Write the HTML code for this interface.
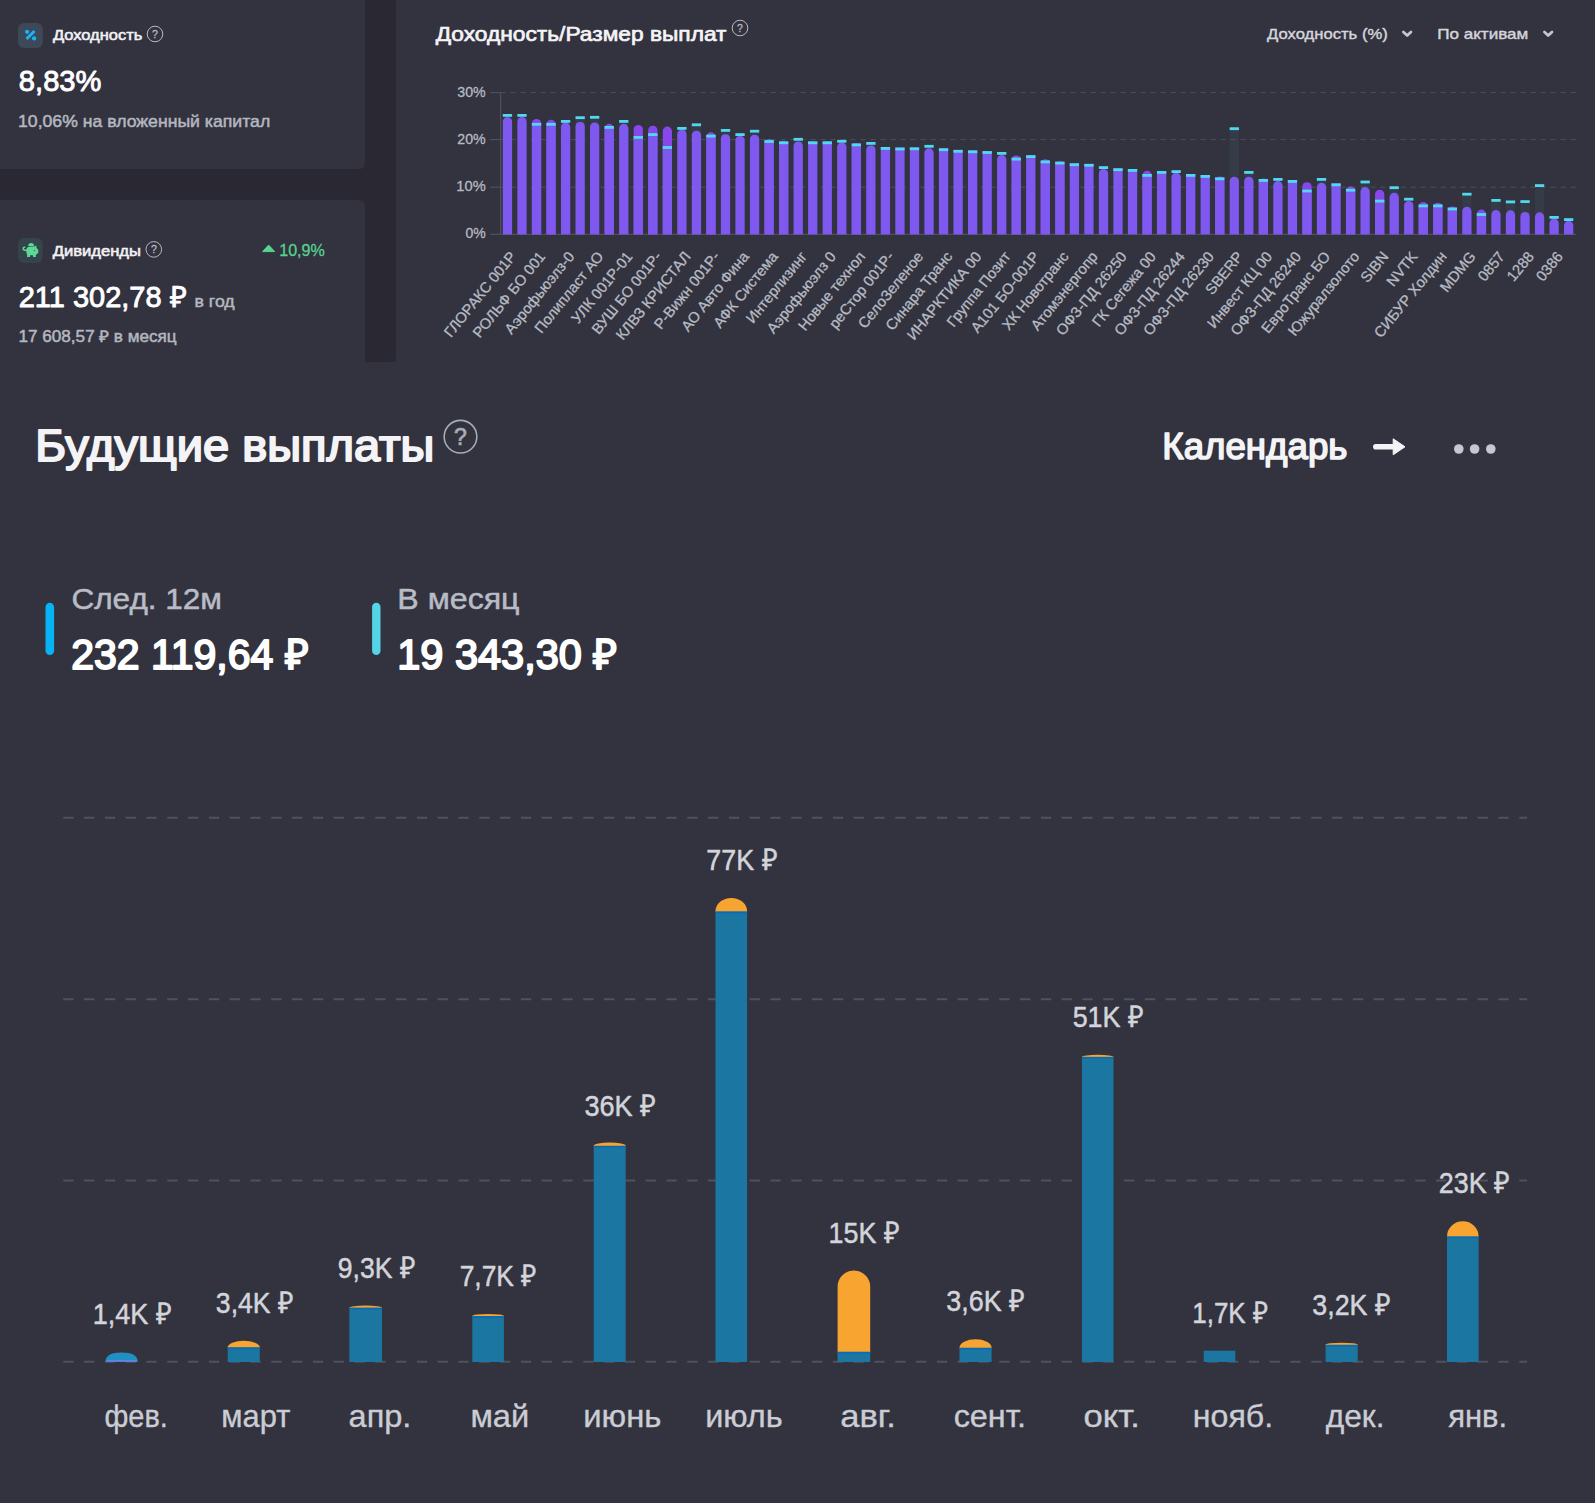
<!DOCTYPE html>
<html><head><meta charset="utf-8"><title>Доходность</title>
<style>
html,body{margin:0;padding:0;background:#33323f;width:1595px;height:1503px;overflow:hidden}
svg{display:block}
text{font-family:"Liberation Sans",sans-serif}
</style></head><body>
<svg width="1595" height="1503" viewBox="0 0 1595 1503">

<rect x="0" y="0" width="1595" height="1503" fill="#33323f"/>
<rect x="0" y="0" width="396" height="362" fill="#292833"/>
<path d="M0 0 H365 V163 Q365 169 359 169 H0 Z" fill="#33323f"/>
<path d="M0 200 H359 Q365 200 365 206 V362 H0 Z" fill="#33323f"/>
<rect x="396" y="0" width="1199" height="362" fill="#33323f"/>
<rect x="18" y="23" width="24.8" height="24.9" rx="6" fill="#3d4959"/>
<g fill="#14b6f6"><circle cx="27.1" cy="31.8" r="2.1"/><circle cx="34.1" cy="38.4" r="2.1"/></g>
<line x1="26.6" y1="38.9" x2="34.5" y2="31" stroke="#14b6f6" stroke-width="2.9"/>
<text x="52.98" y="39.6" font-size="14.5" font-weight="400" fill="#f2f2f4" textLength="89.38" lengthAdjust="spacingAndGlyphs" stroke="#f2f2f4" stroke-width="0.55" stroke-linejoin="round" >Доходность</text>
<circle cx="155" cy="34" r="7.8" fill="none" stroke="#b5b9c1" stroke-width="1"/>
<text x="155" y="37.7908" font-size="10.5" font-weight="400" fill="#b5b9c1" text-anchor="middle" stroke="#b5b9c1" stroke-width="0.3">?</text>
<text x="18.85" y="91.2" font-size="29" font-weight="400" fill="#ffffff" textLength="82.59" lengthAdjust="spacingAndGlyphs" stroke="#ffffff" stroke-width="0.9" stroke-linejoin="round" >8,83%</text>
<text x="18.01" y="126.5" font-size="17" font-weight="400" fill="#b3b7bf" textLength="252.19" lengthAdjust="spacingAndGlyphs" stroke="#b3b7bf" stroke-width="0.5" stroke-linejoin="round" >10,06% на вложенный капитал</text>
<rect x="18.1" y="238.1" width="24.6" height="24.9" rx="6" fill="#35444a"/>
<g fill="#5ed898"><path d="M26.2 250.5 Q26.2 246.6 31 246.6 L34 246.6 L36.3 245.6 L36.5 248.2 Q38.3 248.6 38.3 250.2 L38.3 252.6 Q37.2 254.6 35.8 254.8 L35.8 256.9 L33 256.9 L33 255.2 L30 255.2 L30 256.9 L27.1 256.9 L27.1 254.2 Q26.2 253 26.2 250.5 Z"/><path d="M28.2 246.1 A2.9 3.1 0 0 1 34 246.1 Z"/></g>
<path d="M26.4 250.3 Q23.4 250.6 23.2 248.6 Q23.2 247 24.7 247.2" fill="none" stroke="#5ed898" stroke-width="1.4" stroke-linecap="round"/>
<circle cx="34.5" cy="250.5" r="0.6" fill="#35444a"/>
<text x="52.67" y="256" font-size="14.5" font-weight="400" fill="#f2f2f4" textLength="88.33" lengthAdjust="spacingAndGlyphs" stroke="#f2f2f4" stroke-width="0.55" stroke-linejoin="round" >Дивиденды</text>
<circle cx="153.8" cy="249.4" r="7.8" fill="none" stroke="#b5b9c1" stroke-width="1"/>
<text x="153.8" y="253.1908" font-size="10.5" font-weight="400" fill="#b5b9c1" text-anchor="middle" stroke="#b5b9c1" stroke-width="0.3">?</text>
<path d="M262.6 251.6 L268.6 245 L274.7 251.6 Z" fill="#55d48f" stroke="#55d48f" stroke-width="1" stroke-linejoin="round"/>
<text x="279.20" y="256" font-size="17" font-weight="400" fill="#55d48f" textLength="45.66" lengthAdjust="spacingAndGlyphs" stroke="#55d48f" stroke-width="0.3" stroke-linejoin="round" >10,9%</text>
<text x="18.75" y="306.9" font-size="29" font-weight="400" fill="#ffffff" textLength="167.80" lengthAdjust="spacingAndGlyphs" stroke="#ffffff" stroke-width="0.9" stroke-linejoin="round" >211 302,78 ₽</text>
<text x="194.54" y="306.9" font-size="16" font-weight="400" fill="#b3b7bf" textLength="40.17" lengthAdjust="spacingAndGlyphs" stroke="#b3b7bf" stroke-width="0.5" stroke-linejoin="round" >в год</text>
<text x="18.48" y="341.5" font-size="16" font-weight="400" fill="#b3b7bf" textLength="158.15" lengthAdjust="spacingAndGlyphs" stroke="#b3b7bf" stroke-width="0.5" stroke-linejoin="round" >17 608,57 ₽ в месяц</text>
<text x="435.65" y="40.9" font-size="21" font-weight="400" fill="#f4f4f6" textLength="290.89" lengthAdjust="spacingAndGlyphs" stroke="#f4f4f6" stroke-width="0.7" stroke-linejoin="round" >Доходность/Размер выплат</text>
<circle cx="740" cy="28" r="7.8" fill="none" stroke="#b5b9c1" stroke-width="1"/>
<text x="740" y="31.7908" font-size="10.5" font-weight="400" fill="#b5b9c1" text-anchor="middle" stroke="#b5b9c1" stroke-width="0.3">?</text>
<text x="1267.10" y="38.6" font-size="14.5" font-weight="400" fill="#d4d6db" textLength="120.65" lengthAdjust="spacingAndGlyphs" stroke="#d4d6db" stroke-width="0.4" stroke-linejoin="round" >Доходность (%)</text>
<path d="M1403.4 32 L1407.2 35.6 L1411 32" fill="none" stroke="#c3c6cc" stroke-width="2.7" stroke-linecap="round" stroke-linejoin="round"/>
<text x="1437.22" y="38.6" font-size="14.5" font-weight="400" fill="#d4d6db" textLength="91.12" lengthAdjust="spacingAndGlyphs" stroke="#d4d6db" stroke-width="0.4" stroke-linejoin="round" >По активам</text>
<path d="M1544.4 32 L1548.2 35.6 L1552 32" fill="none" stroke="#c3c6cc" stroke-width="2.7" stroke-linecap="round" stroke-linejoin="round"/>
<rect x="575.49" y="116.30" width="9.3" height="10.60" fill="#353c48"/>
<rect x="590.02" y="115.90" width="9.3" height="11.60" fill="#353c48"/>
<rect x="619.10" y="120.00" width="9.3" height="8.80" fill="#353c48"/>
<rect x="691.78" y="123.40" width="9.3" height="12.30" fill="#353c48"/>
<rect x="720.86" y="129.00" width="9.3" height="10.10" fill="#353c48"/>
<rect x="749.93" y="129.80" width="9.3" height="9.90" fill="#353c48"/>
<rect x="793.54" y="137.90" width="9.3" height="8.50" fill="#353c48"/>
<rect x="866.23" y="142.00" width="9.3" height="8.40" fill="#353c48"/>
<rect x="924.37" y="144.90" width="9.3" height="8.40" fill="#353c48"/>
<rect x="1229.65" y="127.30" width="9.3" height="54.40" fill="#353c48"/>
<rect x="1244.19" y="171.00" width="9.3" height="10.70" fill="#353c48"/>
<rect x="1316.87" y="178.00" width="9.3" height="9.70" fill="#353c48"/>
<rect x="1360.48" y="180.60" width="9.3" height="11.50" fill="#353c48"/>
<rect x="1389.56" y="186.30" width="9.3" height="11.50" fill="#353c48"/>
<rect x="1462.24" y="192.80" width="9.3" height="19.00" fill="#353c48"/>
<rect x="1491.32" y="199.00" width="9.3" height="16.10" fill="#353c48"/>
<rect x="1505.85" y="200.50" width="9.3" height="14.80" fill="#353c48"/>
<rect x="1520.39" y="200.20" width="9.3" height="16.80" fill="#353c48"/>
<rect x="1534.93" y="184.20" width="9.3" height="33.10" fill="#353c48"/>
<line x1="500.6" y1="92.6" x2="1576" y2="92.6" stroke="#4b5159" stroke-width="1" stroke-dasharray="5 5"/>
<line x1="490" y1="92.6" x2="501" y2="92.6" stroke="#4b5159" stroke-width="1.2"/>
<text x="457.35" y="96.5" font-size="14.7" font-weight="400" fill="#b6bac2" textLength="28.36" lengthAdjust="spacingAndGlyphs" stroke="#b6bac2" stroke-width="0.3" stroke-linejoin="round" >30%</text>
<line x1="500.6" y1="139.6" x2="1576" y2="139.6" stroke="#4b5159" stroke-width="1" stroke-dasharray="5 5"/>
<line x1="490" y1="139.6" x2="501" y2="139.6" stroke="#4b5159" stroke-width="1.2"/>
<text x="457.35" y="143.5" font-size="14.7" font-weight="400" fill="#b6bac2" textLength="28.36" lengthAdjust="spacingAndGlyphs" stroke="#b6bac2" stroke-width="0.3" stroke-linejoin="round" >20%</text>
<line x1="500.6" y1="187.2" x2="1576" y2="187.2" stroke="#4b5159" stroke-width="1" stroke-dasharray="5 5"/>
<line x1="490" y1="187.2" x2="501" y2="187.2" stroke="#4b5159" stroke-width="1.2"/>
<text x="456.35" y="191.1" font-size="14.7" font-weight="400" fill="#b6bac2" textLength="29.36" lengthAdjust="spacingAndGlyphs" stroke="#b6bac2" stroke-width="0.3" stroke-linejoin="round" >10%</text>
<text x="465.45" y="238.3" font-size="14.7" font-weight="400" fill="#b6bac2" textLength="20.26" lengthAdjust="spacingAndGlyphs" stroke="#b6bac2" stroke-width="0.3" stroke-linejoin="round" >0%</text>
<line x1="490" y1="234.4" x2="1576" y2="234.4" stroke="#4b5159" stroke-width="1.3"/>
<line x1="500.6" y1="92.6" x2="500.6" y2="234.4" stroke="#4b5159" stroke-width="1.3"/>
<path d="M502.80 234.4 V121.55 A4.65 4.65 0 0 1 512.10 121.55 V234.4 Z" fill="#7f58ef"/>
<rect x="502.80" y="114.00" width="9.3" height="2.8" fill="#4fd9ef"/>
<path d="M517.34 234.4 V121.55 A4.65 4.65 0 0 1 526.64 121.55 V234.4 Z" fill="#7f58ef"/>
<rect x="517.34" y="114.00" width="9.3" height="2.8" fill="#4fd9ef"/>
<path d="M531.87 234.4 V123.65 A4.65 4.65 0 0 1 541.17 123.65 V234.4 Z" fill="#8747ea"/>
<rect x="531.87" y="122.90" width="9.3" height="111.50" fill="#7f58ef"/>
<rect x="531.87" y="122.90" width="9.3" height="2.8" fill="#4fd9ef"/>
<path d="M546.41 234.4 V124.45 A4.65 4.65 0 0 1 555.71 124.45 V234.4 Z" fill="#8747ea"/>
<rect x="546.41" y="122.90" width="9.3" height="111.50" fill="#7f58ef"/>
<rect x="546.41" y="122.90" width="9.3" height="2.8" fill="#4fd9ef"/>
<path d="M560.95 234.4 V127.15 A4.65 4.65 0 0 1 570.25 127.15 V234.4 Z" fill="#7f58ef"/>
<rect x="560.95" y="120.00" width="9.3" height="2.8" fill="#4fd9ef"/>
<path d="M575.49 234.4 V126.55 A4.65 4.65 0 0 1 584.78 126.55 V234.4 Z" fill="#7f58ef"/>
<rect x="575.49" y="116.30" width="9.3" height="2.8" fill="#4fd9ef"/>
<path d="M590.02 234.4 V127.15 A4.65 4.65 0 0 1 599.32 127.15 V234.4 Z" fill="#7f58ef"/>
<rect x="590.02" y="115.90" width="9.3" height="2.8" fill="#4fd9ef"/>
<path d="M604.56 234.4 V128.45 A4.65 4.65 0 0 1 613.86 128.45 V234.4 Z" fill="#8747ea"/>
<rect x="604.56" y="126.00" width="9.3" height="108.40" fill="#7f58ef"/>
<rect x="604.56" y="126.00" width="9.3" height="2.8" fill="#4fd9ef"/>
<path d="M619.10 234.4 V128.45 A4.65 4.65 0 0 1 628.40 128.45 V234.4 Z" fill="#7f58ef"/>
<rect x="619.10" y="120.00" width="9.3" height="2.8" fill="#4fd9ef"/>
<path d="M633.63 234.4 V129.65 A4.65 4.65 0 0 1 642.93 129.65 V234.4 Z" fill="#8747ea"/>
<rect x="633.63" y="136.00" width="9.3" height="98.40" fill="#7f58ef"/>
<rect x="633.63" y="136.00" width="9.3" height="2.8" fill="#4fd9ef"/>
<path d="M648.17 234.4 V130.35 A4.65 4.65 0 0 1 657.47 130.35 V234.4 Z" fill="#8747ea"/>
<rect x="648.17" y="133.20" width="9.3" height="101.20" fill="#7f58ef"/>
<rect x="648.17" y="133.20" width="9.3" height="2.8" fill="#4fd9ef"/>
<path d="M662.71 234.4 V131.25 A4.65 4.65 0 0 1 672.01 131.25 V234.4 Z" fill="#8747ea"/>
<rect x="662.71" y="146.10" width="9.3" height="88.30" fill="#7f58ef"/>
<rect x="662.71" y="146.10" width="9.3" height="2.8" fill="#4fd9ef"/>
<path d="M677.24 234.4 V134.15 A4.65 4.65 0 0 1 686.54 134.15 V234.4 Z" fill="#7f58ef"/>
<rect x="677.24" y="127.00" width="9.3" height="2.8" fill="#4fd9ef"/>
<path d="M691.78 234.4 V135.35 A4.65 4.65 0 0 1 701.08 135.35 V234.4 Z" fill="#7f58ef"/>
<rect x="691.78" y="123.40" width="9.3" height="2.8" fill="#4fd9ef"/>
<path d="M706.32 234.4 V136.95 A4.65 4.65 0 0 1 715.62 136.95 V234.4 Z" fill="#8747ea"/>
<rect x="706.32" y="134.70" width="9.3" height="99.70" fill="#7f58ef"/>
<rect x="706.32" y="134.70" width="9.3" height="2.8" fill="#4fd9ef"/>
<path d="M720.86 234.4 V138.75 A4.65 4.65 0 0 1 730.15 138.75 V234.4 Z" fill="#7f58ef"/>
<rect x="720.86" y="129.00" width="9.3" height="2.8" fill="#4fd9ef"/>
<path d="M735.39 234.4 V140.35 A4.65 4.65 0 0 1 744.69 140.35 V234.4 Z" fill="#7f58ef"/>
<rect x="735.39" y="133.20" width="9.3" height="2.8" fill="#4fd9ef"/>
<path d="M749.93 234.4 V139.35 A4.65 4.65 0 0 1 759.23 139.35 V234.4 Z" fill="#7f58ef"/>
<rect x="749.93" y="129.80" width="9.3" height="2.8" fill="#4fd9ef"/>
<path d="M764.47 234.4 V143.75 A4.65 4.65 0 0 1 773.77 143.75 V234.4 Z" fill="#8747ea"/>
<rect x="764.47" y="140.10" width="9.3" height="94.30" fill="#7f58ef"/>
<rect x="764.47" y="140.10" width="9.3" height="2.8" fill="#4fd9ef"/>
<path d="M779.00 234.4 V145.35 A4.65 4.65 0 0 1 788.30 145.35 V234.4 Z" fill="#8747ea"/>
<rect x="779.00" y="141.40" width="9.3" height="93.00" fill="#7f58ef"/>
<rect x="779.00" y="141.40" width="9.3" height="2.8" fill="#4fd9ef"/>
<path d="M793.54 234.4 V146.05 A4.65 4.65 0 0 1 802.84 146.05 V234.4 Z" fill="#7f58ef"/>
<rect x="793.54" y="137.90" width="9.3" height="2.8" fill="#4fd9ef"/>
<rect x="808.08" y="141.40" width="9.3" height="93.00" fill="#7f58ef"/>
<rect x="808.08" y="141.40" width="9.3" height="2.8" fill="#4fd9ef"/>
<rect x="822.61" y="141.40" width="9.3" height="93.00" fill="#7f58ef"/>
<rect x="822.61" y="141.40" width="9.3" height="2.8" fill="#4fd9ef"/>
<path d="M837.15 234.4 V147.05 A4.65 4.65 0 0 1 846.45 147.05 V234.4 Z" fill="#7f58ef"/>
<rect x="837.15" y="139.90" width="9.3" height="2.8" fill="#4fd9ef"/>
<path d="M851.69 234.4 V147.55 A4.65 4.65 0 0 1 860.99 147.55 V234.4 Z" fill="#8747ea"/>
<rect x="851.69" y="143.50" width="9.3" height="90.90" fill="#7f58ef"/>
<rect x="851.69" y="143.50" width="9.3" height="2.8" fill="#4fd9ef"/>
<path d="M866.23 234.4 V150.05 A4.65 4.65 0 0 1 875.52 150.05 V234.4 Z" fill="#7f58ef"/>
<rect x="866.23" y="142.00" width="9.3" height="2.8" fill="#4fd9ef"/>
<rect x="880.76" y="147.00" width="9.3" height="87.40" fill="#7f58ef"/>
<rect x="880.76" y="147.00" width="9.3" height="2.8" fill="#4fd9ef"/>
<rect x="895.30" y="147.40" width="9.3" height="87.00" fill="#7f58ef"/>
<rect x="895.30" y="147.60" width="9.3" height="2.8" fill="#4fd9ef"/>
<rect x="909.84" y="147.40" width="9.3" height="87.00" fill="#7f58ef"/>
<rect x="909.84" y="147.40" width="9.3" height="2.8" fill="#4fd9ef"/>
<path d="M924.37 234.4 V152.95 A4.65 4.65 0 0 1 933.67 152.95 V234.4 Z" fill="#7f58ef"/>
<rect x="924.37" y="144.90" width="9.3" height="2.8" fill="#4fd9ef"/>
<rect x="938.91" y="148.30" width="9.3" height="86.10" fill="#7f58ef"/>
<rect x="938.91" y="148.30" width="9.3" height="2.8" fill="#4fd9ef"/>
<rect x="953.45" y="149.90" width="9.3" height="84.50" fill="#7f58ef"/>
<rect x="953.45" y="149.90" width="9.3" height="2.8" fill="#4fd9ef"/>
<rect x="967.98" y="150.40" width="9.3" height="84.00" fill="#7f58ef"/>
<rect x="967.98" y="150.40" width="9.3" height="2.8" fill="#4fd9ef"/>
<rect x="982.52" y="151.10" width="9.3" height="83.30" fill="#7f58ef"/>
<rect x="982.52" y="151.10" width="9.3" height="2.8" fill="#4fd9ef"/>
<path d="M997.06 234.4 V159.55 A4.65 4.65 0 0 1 1006.36 159.55 V234.4 Z" fill="#7f58ef"/>
<rect x="997.06" y="152.00" width="9.3" height="2.8" fill="#4fd9ef"/>
<path d="M1011.60 234.4 V159.85 A4.65 4.65 0 0 1 1020.89 159.85 V234.4 Z" fill="#8747ea"/>
<rect x="1011.60" y="157.70" width="9.3" height="76.70" fill="#7f58ef"/>
<rect x="1011.60" y="157.70" width="9.3" height="2.8" fill="#4fd9ef"/>
<rect x="1026.13" y="155.20" width="9.3" height="79.20" fill="#7f58ef"/>
<rect x="1026.13" y="155.20" width="9.3" height="2.8" fill="#4fd9ef"/>
<path d="M1040.67 234.4 V163.85 A4.65 4.65 0 0 1 1049.97 163.85 V234.4 Z" fill="#8747ea"/>
<rect x="1040.67" y="160.50" width="9.3" height="73.90" fill="#7f58ef"/>
<rect x="1040.67" y="160.50" width="9.3" height="2.8" fill="#4fd9ef"/>
<path d="M1055.21 234.4 V165.85 A4.65 4.65 0 0 1 1064.51 165.85 V234.4 Z" fill="#8747ea"/>
<rect x="1055.21" y="161.70" width="9.3" height="72.70" fill="#7f58ef"/>
<rect x="1055.21" y="161.70" width="9.3" height="2.8" fill="#4fd9ef"/>
<rect x="1069.74" y="163.30" width="9.3" height="71.10" fill="#7f58ef"/>
<rect x="1069.74" y="163.30" width="9.3" height="2.8" fill="#4fd9ef"/>
<rect x="1084.28" y="163.90" width="9.3" height="70.50" fill="#7f58ef"/>
<rect x="1084.28" y="163.90" width="9.3" height="2.8" fill="#4fd9ef"/>
<path d="M1098.82 234.4 V173.65 A4.65 4.65 0 0 1 1108.12 173.65 V234.4 Z" fill="#7f58ef"/>
<rect x="1098.82" y="166.20" width="9.3" height="2.8" fill="#4fd9ef"/>
<rect x="1113.35" y="168.30" width="9.3" height="66.10" fill="#7f58ef"/>
<rect x="1113.35" y="168.30" width="9.3" height="2.8" fill="#4fd9ef"/>
<rect x="1127.89" y="169.00" width="9.3" height="65.40" fill="#7f58ef"/>
<rect x="1127.89" y="169.00" width="9.3" height="2.8" fill="#4fd9ef"/>
<path d="M1142.43 234.4 V175.45 A4.65 4.65 0 0 1 1151.73 175.45 V234.4 Z" fill="#8747ea"/>
<rect x="1142.43" y="174.00" width="9.3" height="60.40" fill="#7f58ef"/>
<rect x="1142.43" y="174.00" width="9.3" height="2.8" fill="#4fd9ef"/>
<rect x="1156.97" y="171.00" width="9.3" height="63.40" fill="#7f58ef"/>
<rect x="1156.97" y="171.00" width="9.3" height="2.8" fill="#4fd9ef"/>
<path d="M1171.50 234.4 V177.35 A4.65 4.65 0 0 1 1180.80 177.35 V234.4 Z" fill="#7f58ef"/>
<rect x="1171.50" y="170.20" width="9.3" height="2.8" fill="#4fd9ef"/>
<rect x="1186.04" y="174.00" width="9.3" height="60.40" fill="#7f58ef"/>
<rect x="1186.04" y="174.00" width="9.3" height="2.8" fill="#4fd9ef"/>
<rect x="1200.58" y="175.00" width="9.3" height="59.40" fill="#7f58ef"/>
<rect x="1200.58" y="175.00" width="9.3" height="2.8" fill="#4fd9ef"/>
<path d="M1215.11 234.4 V181.15 A4.65 4.65 0 0 1 1224.41 181.15 V234.4 Z" fill="#8747ea"/>
<rect x="1215.11" y="177.40" width="9.3" height="57.00" fill="#7f58ef"/>
<rect x="1215.11" y="177.40" width="9.3" height="2.8" fill="#4fd9ef"/>
<path d="M1229.65 234.4 V181.35 A4.65 4.65 0 0 1 1238.95 181.35 V234.4 Z" fill="#7f58ef"/>
<rect x="1229.65" y="127.30" width="9.3" height="2.8" fill="#4fd9ef"/>
<path d="M1244.19 234.4 V181.35 A4.65 4.65 0 0 1 1253.49 181.35 V234.4 Z" fill="#7f58ef"/>
<rect x="1244.19" y="171.00" width="9.3" height="2.8" fill="#4fd9ef"/>
<path d="M1258.72 234.4 V183.05 A4.65 4.65 0 0 1 1268.02 183.05 V234.4 Z" fill="#8747ea"/>
<rect x="1258.72" y="179.00" width="9.3" height="55.40" fill="#7f58ef"/>
<rect x="1258.72" y="179.00" width="9.3" height="2.8" fill="#4fd9ef"/>
<path d="M1273.26 234.4 V185.55 A4.65 4.65 0 0 1 1282.56 185.55 V234.4 Z" fill="#7f58ef"/>
<rect x="1273.26" y="178.00" width="9.3" height="2.8" fill="#4fd9ef"/>
<rect x="1287.80" y="180.00" width="9.3" height="54.40" fill="#7f58ef"/>
<rect x="1287.80" y="180.00" width="9.3" height="2.8" fill="#4fd9ef"/>
<path d="M1302.34 234.4 V186.75 A4.65 4.65 0 0 1 1311.63 186.75 V234.4 Z" fill="#8747ea"/>
<rect x="1302.34" y="189.60" width="9.3" height="44.80" fill="#7f58ef"/>
<rect x="1302.34" y="189.60" width="9.3" height="2.8" fill="#4fd9ef"/>
<path d="M1316.87 234.4 V187.35 A4.65 4.65 0 0 1 1326.17 187.35 V234.4 Z" fill="#7f58ef"/>
<rect x="1316.87" y="178.00" width="9.3" height="2.8" fill="#4fd9ef"/>
<rect x="1331.41" y="183.40" width="9.3" height="51.00" fill="#7f58ef"/>
<rect x="1331.41" y="183.40" width="9.3" height="2.8" fill="#4fd9ef"/>
<path d="M1345.95 234.4 V190.95 A4.65 4.65 0 0 1 1355.25 190.95 V234.4 Z" fill="#8747ea"/>
<rect x="1345.95" y="188.80" width="9.3" height="45.60" fill="#7f58ef"/>
<rect x="1345.95" y="188.80" width="9.3" height="2.8" fill="#4fd9ef"/>
<path d="M1360.48 234.4 V191.75 A4.65 4.65 0 0 1 1369.78 191.75 V234.4 Z" fill="#7f58ef"/>
<rect x="1360.48" y="180.60" width="9.3" height="2.8" fill="#4fd9ef"/>
<path d="M1375.02 234.4 V194.25 A4.65 4.65 0 0 1 1384.32 194.25 V234.4 Z" fill="#8747ea"/>
<rect x="1375.02" y="199.70" width="9.3" height="34.70" fill="#7f58ef"/>
<rect x="1375.02" y="199.70" width="9.3" height="2.8" fill="#4fd9ef"/>
<path d="M1389.56 234.4 V197.45 A4.65 4.65 0 0 1 1398.86 197.45 V234.4 Z" fill="#7f58ef"/>
<rect x="1389.56" y="186.30" width="9.3" height="2.8" fill="#4fd9ef"/>
<path d="M1404.09 234.4 V205.55 A4.65 4.65 0 0 1 1413.39 205.55 V234.4 Z" fill="#7f58ef"/>
<rect x="1404.09" y="197.80" width="9.3" height="2.8" fill="#4fd9ef"/>
<path d="M1418.63 234.4 V206.75 A4.65 4.65 0 0 1 1427.93 206.75 V234.4 Z" fill="#8747ea"/>
<rect x="1418.63" y="204.50" width="9.3" height="29.90" fill="#7f58ef"/>
<rect x="1418.63" y="204.50" width="9.3" height="2.8" fill="#4fd9ef"/>
<path d="M1433.17 234.4 V207.35 A4.65 4.65 0 0 1 1442.47 207.35 V234.4 Z" fill="#8747ea"/>
<rect x="1433.17" y="204.50" width="9.3" height="29.90" fill="#7f58ef"/>
<rect x="1433.17" y="204.50" width="9.3" height="2.8" fill="#4fd9ef"/>
<path d="M1447.71 234.4 V211.15 A4.65 4.65 0 0 1 1457.01 211.15 V234.4 Z" fill="#8747ea"/>
<rect x="1447.71" y="207.60" width="9.3" height="26.80" fill="#7f58ef"/>
<rect x="1447.71" y="207.60" width="9.3" height="2.8" fill="#4fd9ef"/>
<path d="M1462.24 234.4 V211.45 A4.65 4.65 0 0 1 1471.54 211.45 V234.4 Z" fill="#7f58ef"/>
<rect x="1462.24" y="192.80" width="9.3" height="2.8" fill="#4fd9ef"/>
<path d="M1476.78 234.4 V214.15 A4.65 4.65 0 0 1 1486.08 214.15 V234.4 Z" fill="#8747ea"/>
<rect x="1476.78" y="213.10" width="9.3" height="21.30" fill="#7f58ef"/>
<rect x="1476.78" y="213.10" width="9.3" height="2.8" fill="#4fd9ef"/>
<path d="M1491.32 234.4 V214.75 A4.65 4.65 0 0 1 1500.62 214.75 V234.4 Z" fill="#7f58ef"/>
<rect x="1491.32" y="199.00" width="9.3" height="2.8" fill="#4fd9ef"/>
<path d="M1505.85 234.4 V214.95 A4.65 4.65 0 0 1 1515.15 214.95 V234.4 Z" fill="#7f58ef"/>
<rect x="1505.85" y="200.50" width="9.3" height="2.8" fill="#4fd9ef"/>
<path d="M1520.39 234.4 V216.65 A4.65 4.65 0 0 1 1529.69 216.65 V234.4 Z" fill="#7f58ef"/>
<rect x="1520.39" y="200.20" width="9.3" height="2.8" fill="#4fd9ef"/>
<path d="M1534.93 234.4 V216.95 A4.65 4.65 0 0 1 1544.23 216.95 V234.4 Z" fill="#7f58ef"/>
<rect x="1534.93" y="184.20" width="9.3" height="2.8" fill="#4fd9ef"/>
<path d="M1549.46 234.4 V223.25 A4.65 4.65 0 0 1 1558.76 223.25 V234.4 Z" fill="#7f58ef"/>
<rect x="1549.46" y="216.00" width="9.3" height="2.8" fill="#4fd9ef"/>
<path d="M1564.00 234.4 V225.45 A4.65 4.65 0 0 1 1573.30 225.45 V234.4 Z" fill="#7f58ef"/>
<rect x="1564.00" y="218.20" width="9.3" height="2.8" fill="#4fd9ef"/>
<text transform="translate(512.85 253.4) rotate(-51)" x="0" y="5.3" font-size="14.8" fill="#b6bbc3" stroke="#b6bbc3" stroke-width="0.3" text-anchor="end">ГЛОРАКС 001P</text>
<text transform="translate(541.92 253.4) rotate(-51)" x="0" y="5.3" font-size="14.8" fill="#b6bbc3" stroke="#b6bbc3" stroke-width="0.3" text-anchor="end">РОЛЬФ БО 001</text>
<text transform="translate(571.00 253.4) rotate(-51)" x="0" y="5.3" font-size="14.8" fill="#b6bbc3" stroke="#b6bbc3" stroke-width="0.3" text-anchor="end">Аэрофьюэлз-0</text>
<text transform="translate(600.07 253.4) rotate(-51)" x="0" y="5.3" font-size="14.8" fill="#b6bbc3" stroke="#b6bbc3" stroke-width="0.3" text-anchor="end">Полипласт АО</text>
<text transform="translate(629.15 253.4) rotate(-51)" x="0" y="5.3" font-size="14.8" fill="#b6bbc3" stroke="#b6bbc3" stroke-width="0.3" text-anchor="end">УЛК 001P-01</text>
<text transform="translate(658.22 253.4) rotate(-51)" x="0" y="5.3" font-size="14.8" fill="#b6bbc3" stroke="#b6bbc3" stroke-width="0.3" text-anchor="end">ВУШ БО 001P-</text>
<text transform="translate(687.29 253.4) rotate(-51)" x="0" y="5.3" font-size="14.8" fill="#b6bbc3" stroke="#b6bbc3" stroke-width="0.3" text-anchor="end">КЛВЗ КРИСТАЛ</text>
<text transform="translate(716.37 253.4) rotate(-51)" x="0" y="5.3" font-size="14.8" fill="#b6bbc3" stroke="#b6bbc3" stroke-width="0.3" text-anchor="end">Р-Вижн 001P-</text>
<text transform="translate(745.44 253.4) rotate(-51)" x="0" y="5.3" font-size="14.8" fill="#b6bbc3" stroke="#b6bbc3" stroke-width="0.3" text-anchor="end">АО Авто Фина</text>
<text transform="translate(774.52 253.4) rotate(-51)" x="0" y="5.3" font-size="14.8" fill="#b6bbc3" stroke="#b6bbc3" stroke-width="0.3" text-anchor="end">АФК Система</text>
<text transform="translate(803.59 253.4) rotate(-51)" x="0" y="5.3" font-size="14.8" fill="#b6bbc3" stroke="#b6bbc3" stroke-width="0.3" text-anchor="end">Интерлизинг</text>
<text transform="translate(832.66 253.4) rotate(-51)" x="0" y="5.3" font-size="14.8" fill="#b6bbc3" stroke="#b6bbc3" stroke-width="0.3" text-anchor="end">Аэрофьюэлз 0</text>
<text transform="translate(861.74 253.4) rotate(-51)" x="0" y="5.3" font-size="14.8" fill="#b6bbc3" stroke="#b6bbc3" stroke-width="0.3" text-anchor="end">Новые технол</text>
<text transform="translate(890.81 253.4) rotate(-51)" x="0" y="5.3" font-size="14.8" fill="#b6bbc3" stroke="#b6bbc3" stroke-width="0.3" text-anchor="end">реСтор 001P-</text>
<text transform="translate(919.89 253.4) rotate(-51)" x="0" y="5.3" font-size="14.8" fill="#b6bbc3" stroke="#b6bbc3" stroke-width="0.3" text-anchor="end">СелоЗеленое</text>
<text transform="translate(948.96 253.4) rotate(-51)" x="0" y="5.3" font-size="14.8" fill="#b6bbc3" stroke="#b6bbc3" stroke-width="0.3" text-anchor="end">Синара Транс</text>
<text transform="translate(978.03 253.4) rotate(-51)" x="0" y="5.3" font-size="14.8" fill="#b6bbc3" stroke="#b6bbc3" stroke-width="0.3" text-anchor="end">ИНАРКТИКА 00</text>
<text transform="translate(1007.11 253.4) rotate(-51)" x="0" y="5.3" font-size="14.8" fill="#b6bbc3" stroke="#b6bbc3" stroke-width="0.3" text-anchor="end">Группа Позит</text>
<text transform="translate(1036.18 253.4) rotate(-51)" x="0" y="5.3" font-size="14.8" fill="#b6bbc3" stroke="#b6bbc3" stroke-width="0.3" text-anchor="end">А101 БО-001P</text>
<text transform="translate(1065.26 253.4) rotate(-51)" x="0" y="5.3" font-size="14.8" fill="#b6bbc3" stroke="#b6bbc3" stroke-width="0.3" text-anchor="end">ХК Новотранс</text>
<text transform="translate(1094.33 253.4) rotate(-51)" x="0" y="5.3" font-size="14.8" fill="#b6bbc3" stroke="#b6bbc3" stroke-width="0.3" text-anchor="end">Атомэнергопр</text>
<text transform="translate(1123.40 253.4) rotate(-51)" x="0" y="5.3" font-size="14.8" fill="#b6bbc3" stroke="#b6bbc3" stroke-width="0.3" text-anchor="end">ОФЗ-ПД 26250</text>
<text transform="translate(1152.48 253.4) rotate(-51)" x="0" y="5.3" font-size="14.8" fill="#b6bbc3" stroke="#b6bbc3" stroke-width="0.3" text-anchor="end">ГК Сегежа 00</text>
<text transform="translate(1181.55 253.4) rotate(-51)" x="0" y="5.3" font-size="14.8" fill="#b6bbc3" stroke="#b6bbc3" stroke-width="0.3" text-anchor="end">ОФЗ-ПД 26244</text>
<text transform="translate(1210.63 253.4) rotate(-51)" x="0" y="5.3" font-size="14.8" fill="#b6bbc3" stroke="#b6bbc3" stroke-width="0.3" text-anchor="end">ОФЗ-ПД 26230</text>
<text transform="translate(1239.70 253.4) rotate(-51)" x="0" y="5.3" font-size="14.8" fill="#b6bbc3" stroke="#b6bbc3" stroke-width="0.3" text-anchor="end">SBERP</text>
<text transform="translate(1268.77 253.4) rotate(-51)" x="0" y="5.3" font-size="14.8" fill="#b6bbc3" stroke="#b6bbc3" stroke-width="0.3" text-anchor="end">Инвест КЦ 00</text>
<text transform="translate(1297.85 253.4) rotate(-51)" x="0" y="5.3" font-size="14.8" fill="#b6bbc3" stroke="#b6bbc3" stroke-width="0.3" text-anchor="end">ОФЗ-ПД 26240</text>
<text transform="translate(1326.92 253.4) rotate(-51)" x="0" y="5.3" font-size="14.8" fill="#b6bbc3" stroke="#b6bbc3" stroke-width="0.3" text-anchor="end">ЕвроТранс БО</text>
<text transform="translate(1356.00 253.4) rotate(-51)" x="0" y="5.3" font-size="14.8" fill="#b6bbc3" stroke="#b6bbc3" stroke-width="0.3" text-anchor="end">Южуралзолото</text>
<text transform="translate(1385.07 253.4) rotate(-51)" x="0" y="5.3" font-size="14.8" fill="#b6bbc3" stroke="#b6bbc3" stroke-width="0.3" text-anchor="end">SIBN</text>
<text transform="translate(1414.14 253.4) rotate(-51)" x="0" y="5.3" font-size="14.8" fill="#b6bbc3" stroke="#b6bbc3" stroke-width="0.3" text-anchor="end">NVTK</text>
<text transform="translate(1443.22 253.4) rotate(-51)" x="0" y="5.3" font-size="14.8" fill="#b6bbc3" stroke="#b6bbc3" stroke-width="0.3" text-anchor="end">СИБУР Холдин</text>
<text transform="translate(1472.29 253.4) rotate(-51)" x="0" y="5.3" font-size="14.8" fill="#b6bbc3" stroke="#b6bbc3" stroke-width="0.3" text-anchor="end">MDMG</text>
<text transform="translate(1501.37 253.4) rotate(-51)" x="0" y="5.3" font-size="14.8" fill="#b6bbc3" stroke="#b6bbc3" stroke-width="0.3" text-anchor="end">0857</text>
<text transform="translate(1530.44 253.4) rotate(-51)" x="0" y="5.3" font-size="14.8" fill="#b6bbc3" stroke="#b6bbc3" stroke-width="0.3" text-anchor="end">1288</text>
<text transform="translate(1559.51 253.4) rotate(-51)" x="0" y="5.3" font-size="14.8" fill="#b6bbc3" stroke="#b6bbc3" stroke-width="0.3" text-anchor="end">0386</text>
<text x="35.34" y="461.1" font-size="44" font-weight="400" fill="#f4f4f6" textLength="399.11" lengthAdjust="spacingAndGlyphs" stroke="#f4f4f6" stroke-width="1.9" stroke-linejoin="round" >Будущие выплаты</text>
<circle cx="460.5" cy="436.7" r="16.3" fill="none" stroke="#a9acb4" stroke-width="1.6"/>
<text x="460.5" y="444.97999999999996" font-size="23" font-weight="400" fill="#a9acb4" text-anchor="middle" stroke="#a9acb4" stroke-width="0.7">?</text>
<text x="1162.27" y="459.4" font-size="37.5" font-weight="400" fill="#f4f4f6" textLength="185.14" lengthAdjust="spacingAndGlyphs" stroke="#f4f4f6" stroke-width="1.6" stroke-linejoin="round" >Календарь</text>
<path d="M1375.8 446.8 H1396" stroke="#f4f4f6" stroke-width="5.6" stroke-linecap="round"/><path d="M1393.2 438.8 L1405 446.8 L1393.2 454.8 Z" fill="#f4f4f6" stroke="#f4f4f6" stroke-width="1" stroke-linejoin="round"/>
<g fill="#c5c8cf"><circle cx="1458.8" cy="449" r="4.8"/><circle cx="1474.6" cy="449" r="4.8"/><circle cx="1490.8" cy="449" r="4.8"/></g>
<rect x="45.5" y="602.7" width="8.6" height="52.4" rx="4.3" fill="#06b3f4"/>
<text x="71.40" y="609" font-size="30" font-weight="400" fill="#b8bcc4" textLength="150.66" lengthAdjust="spacingAndGlyphs" stroke="#b8bcc4" stroke-width="0.5" stroke-linejoin="round" >След. 12м</text>
<text x="71.20" y="669.2" font-size="42" font-weight="400" fill="#ffffff" textLength="236.93" lengthAdjust="spacingAndGlyphs" stroke="#ffffff" stroke-width="1.9" stroke-linejoin="round" >232 119,64 ₽</text>
<rect x="372.1" y="602.7" width="8.4" height="52.4" rx="4.2" fill="#55d3e7"/>
<text x="397.31" y="609" font-size="30" font-weight="400" fill="#b8bcc4" textLength="122.24" lengthAdjust="spacingAndGlyphs" stroke="#b8bcc4" stroke-width="0.5" stroke-linejoin="round" >В месяц</text>
<text x="397.18" y="669.2" font-size="42" font-weight="400" fill="#ffffff" textLength="219.95" lengthAdjust="spacingAndGlyphs" stroke="#ffffff" stroke-width="1.9" stroke-linejoin="round" >19 343,30 ₽</text>
<line x1="63.2" y1="817.8" x2="1527.2" y2="817.8" stroke="#4c535c" stroke-width="2" stroke-dasharray="10.4 10.4"/>
<line x1="63.2" y1="999.2" x2="1527.2" y2="999.2" stroke="#4c535c" stroke-width="2" stroke-dasharray="10.4 10.4"/>
<line x1="63.2" y1="1180.4" x2="1527.2" y2="1180.4" stroke="#4c535c" stroke-width="2" stroke-dasharray="10.4 10.4"/>
<line x1="63.2" y1="1361.7" x2="1527.2" y2="1361.7" stroke="#4c535c" stroke-width="2" stroke-dasharray="10.4 10.4"/>
<path d="M105.5 1362 Q105.5 1352.6 121.6 1352.6 Q137.7 1352.6 137.7 1362 Z" fill="#2090c4"/>
<rect x="106.5" y="1360" width="30.19999999999999" height="1.6" fill="#6f7fe0"/>
<text x="92.65" y="1324" font-size="30" font-weight="400" fill="#d2d5da" textLength="78.50" lengthAdjust="spacingAndGlyphs" stroke="#d2d5da" stroke-width="0.5" stroke-linejoin="round" >1,4K ₽</text>
<text x="104.47" y="1426.6" font-size="32" font-weight="400" fill="#cacdd3" textLength="63.37" lengthAdjust="spacingAndGlyphs" stroke="#cacdd3" stroke-width="0.35" stroke-linejoin="round" >фев.</text>
<path d="M227.7 1347.8 V1347.3 A16.05000000000001 6.599999999999909 0 0 1 259.8 1347.3 V1347.8 Z" fill="#f7a430"/>
<rect x="227.7" y="1347.3" width="32.10000000000002" height="14.700000000000045" fill="#1b76a1"/>
<rect x="227.7" y="1347.6" width="32.10000000000002" height="1.6" fill="#0b6cb3"/>
<text x="215.86" y="1313.1" font-size="30" font-weight="400" fill="#d2d5da" textLength="77.19" lengthAdjust="spacingAndGlyphs" stroke="#d2d5da" stroke-width="0.5" stroke-linejoin="round" >3,4K ₽</text>
<text x="221.24" y="1426.6" font-size="32" font-weight="400" fill="#cacdd3" textLength="69.05" lengthAdjust="spacingAndGlyphs" stroke="#cacdd3" stroke-width="0.35" stroke-linejoin="round" >март</text>
<path d="M349.4 1308.1 V1307.6 A16.30000000000001 2.0 0 0 1 382.0 1307.6 V1308.1 Z" fill="#f7a430"/>
<rect x="349.4" y="1307.6" width="32.60000000000002" height="54.40000000000009" fill="#1b76a1"/>
<rect x="349.4" y="1307.8999999999999" width="32.60000000000002" height="1.6" fill="#0b6cb3"/>
<text x="337.76" y="1278" font-size="30" font-weight="400" fill="#d2d5da" textLength="77.09" lengthAdjust="spacingAndGlyphs" stroke="#d2d5da" stroke-width="0.5" stroke-linejoin="round" >9,3K ₽</text>
<text x="348.56" y="1426.6" font-size="32" font-weight="400" fill="#cacdd3" textLength="62.80" lengthAdjust="spacingAndGlyphs" stroke="#cacdd3" stroke-width="0.35" stroke-linejoin="round" >апр.</text>
<path d="M472.3 1316.5 V1316.0 A15.799999999999983 2.0 0 0 1 503.9 1316.0 V1316.5 Z" fill="#f7a430"/>
<rect x="472.3" y="1316.0" width="31.599999999999966" height="46.0" fill="#1b76a1"/>
<rect x="472.3" y="1316.3" width="31.599999999999966" height="1.6" fill="#0b6cb3"/>
<text x="459.67" y="1286.4" font-size="30" font-weight="400" fill="#d2d5da" textLength="76.58" lengthAdjust="spacingAndGlyphs" stroke="#d2d5da" stroke-width="0.5" stroke-linejoin="round" >7,7K ₽</text>
<text x="470.44" y="1426.6" font-size="32" font-weight="400" fill="#cacdd3" textLength="58.80" lengthAdjust="spacingAndGlyphs" stroke="#cacdd3" stroke-width="0.35" stroke-linejoin="round" >май</text>
<path d="M593.7 1146.2 V1145.7 A16.0 3.1000000000001364 0 0 1 625.7 1145.7 V1146.2 Z" fill="#f7a430"/>
<rect x="593.7" y="1145.7" width="32.0" height="216.29999999999995" fill="#1b76a1"/>
<rect x="593.7" y="1146.0" width="32.0" height="1.6" fill="#0b6cb3"/>
<text x="584.45" y="1116.1" font-size="30" font-weight="400" fill="#d2d5da" textLength="71.10" lengthAdjust="spacingAndGlyphs" stroke="#d2d5da" stroke-width="0.5" stroke-linejoin="round" >36K ₽</text>
<text x="583.22" y="1426.6" font-size="32" font-weight="400" fill="#cacdd3" textLength="78.19" lengthAdjust="spacingAndGlyphs" stroke="#cacdd3" stroke-width="0.35" stroke-linejoin="round" >июнь</text>
<path d="M715.5 911.9 V911.4 A15.800000000000011 13.5 0 0 1 747.1 911.4 V911.9 Z" fill="#f7a430"/>
<rect x="715.5" y="911.4" width="31.600000000000023" height="450.6" fill="#1b76a1"/>
<rect x="715.5" y="911.6999999999999" width="31.600000000000023" height="1.6" fill="#0b6cb3"/>
<text x="706.35" y="870.4" font-size="30" font-weight="400" fill="#d2d5da" textLength="70.60" lengthAdjust="spacingAndGlyphs" stroke="#d2d5da" stroke-width="0.5" stroke-linejoin="round" >77K ₽</text>
<text x="705.15" y="1426.6" font-size="32" font-weight="400" fill="#cacdd3" textLength="77.56" lengthAdjust="spacingAndGlyphs" stroke="#cacdd3" stroke-width="0.35" stroke-linejoin="round" >июль</text>
<path d="M837.6 1352.2 V1286.8 A16.30000000000001 16.30000000000001 0 0 1 870.2 1286.8 V1352.2 Z" fill="#f7a430"/>
<rect x="837.6" y="1351.7" width="32.60000000000002" height="10.299999999999955" fill="#1b76a1"/>
<rect x="837.6" y="1352.0" width="32.60000000000002" height="1.6" fill="#0b6cb3"/>
<text x="828.56" y="1243.3" font-size="30" font-weight="400" fill="#d2d5da" textLength="70.49" lengthAdjust="spacingAndGlyphs" stroke="#d2d5da" stroke-width="0.5" stroke-linejoin="round" >15K ₽</text>
<text x="840.20" y="1426.6" font-size="32" font-weight="400" fill="#cacdd3" textLength="55.55" lengthAdjust="spacingAndGlyphs" stroke="#cacdd3" stroke-width="0.35" stroke-linejoin="round" >авг.</text>
<path d="M959.5 1348.2 V1347.7 A16.05000000000001 8.5 0 0 1 991.6 1347.7 V1348.2 Z" fill="#f7a430"/>
<rect x="959.5" y="1347.7" width="32.10000000000002" height="14.299999999999955" fill="#1b76a1"/>
<rect x="959.5" y="1348.0" width="32.10000000000002" height="1.6" fill="#0b6cb3"/>
<text x="946.35" y="1311.4" font-size="30" font-weight="400" fill="#d2d5da" textLength="78.10" lengthAdjust="spacingAndGlyphs" stroke="#d2d5da" stroke-width="0.5" stroke-linejoin="round" >3,6K ₽</text>
<text x="953.66" y="1426.6" font-size="32" font-weight="400" fill="#cacdd3" textLength="72.29" lengthAdjust="spacingAndGlyphs" stroke="#cacdd3" stroke-width="0.35" stroke-linejoin="round" >сент.</text>
<path d="M1081.9 1057.3 V1056.8 A15.799999999999955 2.0 0 0 1 1113.5 1056.8 V1057.3 Z" fill="#f7a430"/>
<rect x="1081.9" y="1056.8" width="31.59999999999991" height="305.20000000000005" fill="#1b76a1"/>
<rect x="1081.9" y="1057.1" width="31.59999999999991" height="1.6" fill="#0b6cb3"/>
<text x="1072.65" y="1026.9" font-size="30" font-weight="400" fill="#d2d5da" textLength="70.60" lengthAdjust="spacingAndGlyphs" stroke="#d2d5da" stroke-width="0.5" stroke-linejoin="round" >51K ₽</text>
<text x="1083.49" y="1426.6" font-size="32" font-weight="400" fill="#cacdd3" textLength="56.46" lengthAdjust="spacingAndGlyphs" stroke="#cacdd3" stroke-width="0.35" stroke-linejoin="round" >окт.</text>
<rect x="1203.7" y="1350.7" width="31.59999999999991" height="11.299999999999955" fill="#1b76a1"/>
<text x="1192.22" y="1323.1" font-size="30" font-weight="400" fill="#d2d5da" textLength="75.43" lengthAdjust="spacingAndGlyphs" stroke="#d2d5da" stroke-width="0.5" stroke-linejoin="round" >1,7K ₽</text>
<text x="1192.87" y="1426.6" font-size="32" font-weight="400" fill="#cacdd3" textLength="80.26" lengthAdjust="spacingAndGlyphs" stroke="#cacdd3" stroke-width="0.35" stroke-linejoin="round" >нояб.</text>
<path d="M1325.6 1345.2 V1344.7 A16.050000000000068 2.0 0 0 1 1357.7 1344.7 V1345.2 Z" fill="#f7a430"/>
<rect x="1325.6" y="1344.7" width="32.100000000000136" height="17.299999999999955" fill="#1b76a1"/>
<rect x="1325.6" y="1345.0" width="32.100000000000136" height="1.6" fill="#0b6cb3"/>
<text x="1312.36" y="1314.6" font-size="30" font-weight="400" fill="#d2d5da" textLength="77.69" lengthAdjust="spacingAndGlyphs" stroke="#d2d5da" stroke-width="0.5" stroke-linejoin="round" >3,2K ₽</text>
<text x="1325.77" y="1426.6" font-size="32" font-weight="400" fill="#cacdd3" textLength="58.71" lengthAdjust="spacingAndGlyphs" stroke="#cacdd3" stroke-width="0.35" stroke-linejoin="round" >дек.</text>
<path d="M1447.0 1236.9 V1236.4 A15.799999999999955 15.100000000000136 0 0 1 1478.6 1236.4 V1236.9 Z" fill="#f7a430"/>
<rect x="1447.0" y="1236.4" width="31.59999999999991" height="125.59999999999991" fill="#1b76a1"/>
<rect x="1447.0" y="1236.7" width="31.59999999999991" height="1.6" fill="#0b6cb3"/>
<text x="1438.75" y="1193.4" font-size="30" font-weight="400" fill="#d2d5da" textLength="70.60" lengthAdjust="spacingAndGlyphs" stroke="#d2d5da" stroke-width="0.5" stroke-linejoin="round" >23K ₽</text>
<text x="1448.17" y="1426.6" font-size="32" font-weight="400" fill="#cacdd3" textLength="59.05" lengthAdjust="spacingAndGlyphs" stroke="#cacdd3" stroke-width="0.35" stroke-linejoin="round" >янв.</text>
</svg></body></html>
